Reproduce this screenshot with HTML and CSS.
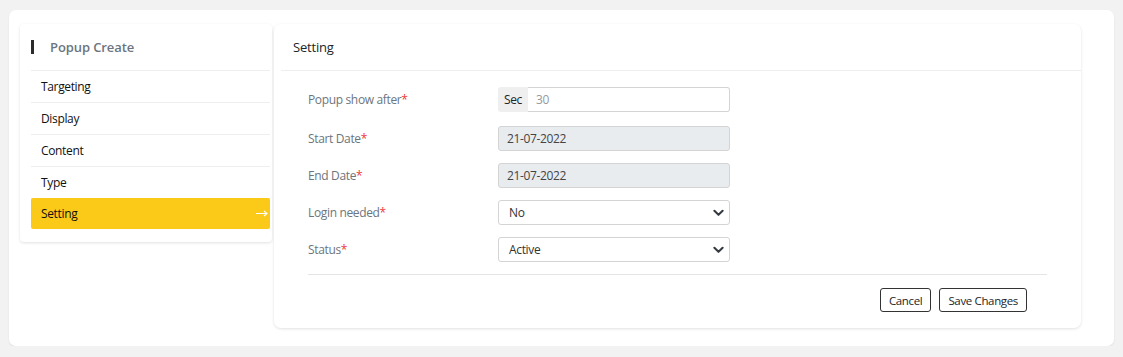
FILE: index.html
```html
<!DOCTYPE html>
<html>
<head>
<meta charset="utf-8">
<link rel="stylesheet" href="styles.css">
</head>
<body>
<div class="page">
  <div class="layout">
    <aside class="side-card">
      <div class="side-head"><span class="side-bar"></span><span class="side-title">Popup Create</span></div>
      <ul class="menu">
        <li class="menu-item">Targeting</li>
        <li class="menu-item">Display</li>
        <li class="menu-item">Content</li>
        <li class="menu-item">Type</li>
        <li class="menu-item active">Setting<svg class="arrow" viewBox="0 0 12 7" width="12" height="7"><path d="M0 3.5 H11 M8 1 L11 3.5 L8 6" fill="none" stroke="#fff" stroke-width="1.1"/></svg></li>
      </ul>
    </aside>
    <section class="main-card">
      <div class="main-head">Setting</div>
      <div class="main-body">
        <div class="form-row first">
          <label class="form-label">Popup show after<span class="req">*</span></label>
          <div class="input-group">
            <span class="addon">Sec</span>
            <span class="control plain placeholder">30</span>
          </div>
        </div>
        <div class="form-row">
          <label class="form-label">Start Date<span class="req">*</span></label>
          <div class="control disabled">21-07-2022</div>
        </div>
        <div class="form-row">
          <label class="form-label">End Date<span class="req">*</span></label>
          <div class="control disabled">21-07-2022</div>
        </div>
        <div class="form-row">
          <label class="form-label">Login needed<span class="req">*</span></label>
          <div class="control select">No<svg class="chev" viewBox="0 0 12 8" width="11" height="8"><path d="M1.5 1.5 L6 6 L10.5 1.5" fill="none" stroke="#343a40" stroke-width="2.2" stroke-linecap="round" stroke-linejoin="round"/></svg></div>
        </div>
        <div class="form-row">
          <label class="form-label">Status<span class="req">*</span></label>
          <div class="control select">Active<svg class="chev" viewBox="0 0 12 8" width="11" height="8"><path d="M1.5 1.5 L6 6 L10.5 1.5" fill="none" stroke="#343a40" stroke-width="2.2" stroke-linecap="round" stroke-linejoin="round"/></svg></div>
        </div>
        <div class="form-foot">
          <button class="btn">Cancel</button>
          <button class="btn">Save Changes</button>
        </div>
      </div>
    </section>
  </div>
</div>
</body>
</html>
```

FILE: styles.css
```css
* { box-sizing: border-box; }
html, body { margin: 0; padding: 0; }
body {
  background: #f2f2f2;
  font-family: "Open Sans", "Liberation Sans", sans-serif;
  font-size: 12px;
  letter-spacing: -0.35px;
  color: #212529;
  padding: 10px 9px 0 9px;
}
.page {
  width: 1105px;
  height: 336px;
  background: #fff;
  border-radius: 7px;
  box-shadow: 0 1px 2px rgba(0,0,0,0.08);
  padding: 14px 0 0 11px;
}
.layout {
  display: flex;
  align-items: flex-start;
  gap: 2px;
}
.side-card {
  width: 252px;
  background: #fff;
  border-radius: 4px;
  box-shadow: 0 1px 3px rgba(0,0,0,0.12);
  padding: 0 2px 13px 11px;
}
.side-head {
  height: 47px;
  display: flex;
  align-items: center;
  border-bottom: 1px solid #eeeeee;
}
.side-bar {
  width: 3px;
  height: 14px;
  background: #2b2b2b;
  margin-right: 16px;
}
.side-title {
  font-size: 13px;
  font-weight: 600;
  color: #6c757d;
  letter-spacing: -0.1px;
}
.menu {
  list-style: none;
  margin: 0;
  padding: 0;
}
.menu-item {
  height: 32px;
  display: flex;
  align-items: center;
  padding-left: 10px;
  border-bottom: 1px solid #eeeeee;
  color: #111;
  font-size: 12px;
}
.menu-item.active {
  background: #fbca18;
  border-bottom: none;
  border-radius: 2px;
  height: 31px;
  margin-top: -1px;
  justify-content: space-between;
  padding-right: 2px;
}
.arrow { display: block; }
.main-card {
  width: 807px;
  height: 304px;
  background: #fff;
  border-radius: 7px;
  box-shadow: 0 1px 3px rgba(0,0,0,0.12);
}
.main-head {
  height: 47px;
  display: flex;
  align-items: center;
  font-size: 13px;
  color: #212529;
  border-bottom: 1px solid #eeeeee;
  margin-left: 7px;
  padding-left: 12px;
  letter-spacing: -0.2px;
}
.main-body {
  padding: 16px 34px 0 34px;
}
.form-row {
  display: flex;
  align-items: center;
  height: 25px;
  margin-bottom: 12px;
}
.form-row.first { margin-bottom: 14px; }
.form-label {
  width: 190px;
  color: #6c757d;
  font-size: 12px;
}
.req { color: #f0383b; }
.input-group {
  display: flex;
  width: 232px;
  height: 25px;
}
.addon {
  width: 30px;
  background: #efefef;
  display: flex;
  align-items: center;
  justify-content: center;
  border-radius: 3px 0 0 3px;
  font-size: 12px;
  color: #212529;
}
.control {
  width: 232px;
  height: 25px;
  border: 1px solid #d4d4d4;
  border-radius: 3px;
  display: flex;
  align-items: center;
  padding-left: 8px;
  font-size: 12px;
  color: #444;
  background: #fff;
}
.control.plain {
  flex: 1;
  width: auto;
  border-radius: 0 3px 3px 0;
  border-left: none;
}
.placeholder { color: #999; }
.control.disabled {
  background: #e9ecef;
  color: #444;
}
.control.select {
  justify-content: space-between;
  padding-left: 10px;
  padding-right: 5px;
  color: #333;
}
.chev { display: block; }
.form-foot {
  border-top: 1px solid #e4e4e4;
  padding: 13px 20px 0 0;
  display: flex;
  justify-content: flex-end;
  gap: 8px;
}
.btn {
  font-family: "Open Sans", "Liberation Sans", sans-serif;
  font-size: 11.5px;
  letter-spacing: -0.35px;
  color: #212529;
  background: #fff;
  border: 1px solid #333;
  border-radius: 3px;
  height: 24px;
  padding: 0 8px;
}
```
